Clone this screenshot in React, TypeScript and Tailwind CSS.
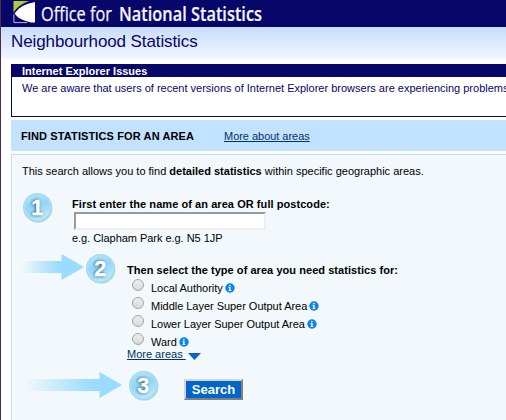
import React from "react";

function Logo() {
  return (
    <svg width="280" height="27" viewBox="0 0 280 27" className="block overflow-visible">
      <path d="M12.5 1H28Q17 5 12.5 12.5Z" fill="#b5c93c" />
      <path d="M12.9 14.5V22.6H26" fill="none" stroke="#c9cbe6" strokeWidth="0.9" />
      <path d="M34 2V22.5H30Q18 20 13.5 13.5Q19 4.5 34 2Z" fill="#fff" />
      <g fontFamily="'Open Sans', 'Noto Sans', sans-serif" fontSize="19.5" fill="#f4f4ff">
        <text x="40" y="20.5" stroke="#f4f4ff" strokeWidth="0.25" textLength="71" lengthAdjust="spacingAndGlyphs">Office for</text>
        <text x="118" y="20.5" fontWeight="600" stroke="#f4f4ff" strokeWidth="0.2" textLength="143" lengthAdjust="spacingAndGlyphs">National Statistics</text>
      </g>
    </svg>
  );
}

function Step({ n }: { n: number }) {
  return (
    <svg width="32" height="32" viewBox="0 0 32 32" className="block shrink-0">
      <defs>
        <linearGradient id={"ball" + n} x1="0" y1="0" x2="0.3" y2="1">
          <stop offset="0" stopColor="#b9e6fa" />
          <stop offset="0.5" stopColor="#94d5f6" />
          <stop offset="1" stopColor="#b4e9fd" />
        </linearGradient>
        <filter id={"soft" + n} x="-50%" y="-50%" width="200%" height="200%">
          <feGaussianBlur stdDeviation="1.5" />
        </filter>
      </defs>
      <circle cx="16.1" cy="16.5" r="14.3" fill="#b9dcc8" />
      <circle cx="15.5" cy="15.5" r="14.5" fill="#9bd8f4" />
      <circle cx="15.5" cy="15.5" r="13" fill={"url(#ball" + n + ")"} stroke="#b2e2f8" strokeWidth="1" />
      <g fontFamily="'Liberation Sans', Arial, sans-serif" fontWeight="700" fontSize="22.5" textAnchor="middle">
        <text x="14.5" y="23.3" fill="#3d6480" stroke="#3d6480" strokeWidth="1" filter={"url(#soft" + n + ")"} textLength="11.5" lengthAdjust="spacingAndGlyphs">{n}</text>
        <text x="15.2" y="22.8" fill="#fff" stroke="#fff" strokeWidth="0.3" textLength="12" lengthAdjust="spacingAndGlyphs">{n}</text>
      </g>
    </svg>
  );
}

function Arrow({ w, id }: { w: number; id: string }) {
  const head = w - 22.5;
  return (
    <svg width={w} height="28" className="block shrink-0">
      <defs>
        <linearGradient id={id}>
          <stop offset="0" stopColor="#f2f8fb" />
          <stop offset="0.9" stopColor="#99dcff" />
        </linearGradient>
      </defs>
      <rect x="0" y="8" width={head + 1} height="12" fill={`url(#${id})`} />
      <path d={`M${head} 1L${w} 14L${head} 27Z`} fill="#99dcff" />
    </svg>
  );
}

function Info() {
  return (
    <svg width="10" height="10" viewBox="0 0 10 10" className="ml-0.5 block">
      <circle cx="5" cy="5" r="4.7" fill="#0a84f5" />
      <path d="M4 2H5.6V3.3H4ZM3.5 4.1H5.6V7.2H6.4V8H3.5V7.2H4.2V4.9H3.5Z" fill="#fff" />
    </svg>
  );
}

const areas = ["Local Authority", "Middle Layer Super Output Area", "Lower Layer Super Output Area", "Ward"];

export default function App() {
  return (
    <div className="h-[420px] w-[506px] overflow-hidden border-l border-[#512b3f] bg-white font-['Liberation_Sans',Arial,sans-serif] text-[11px] leading-[14px] text-black">
      <header className="h-[27px] bg-[#070669]"><Logo /></header>
      <div className="h-8 bg-linear-to-b from-[#c9dcfb] to-[#f2f7ff] pt-[5px] pl-2.5 text-[17px] leading-5 tracking-[-0.1px] whitespace-nowrap text-[#070669]">
        Neighbourhood Statistics
      </div>
      <div className="pt-[5px] pl-2.5">
        <section className="h-[53px] w-[510px] border border-[#070669] bg-white whitespace-nowrap">
          <h2 className="h-3 bg-[#070669] pl-2.5 leading-[13px] font-bold text-white">Internet Explorer Issues</h2>
          <p className="pt-1 pl-2.5 text-[#070669]">We are aware that users of recent versions of Internet Explorer browsers are experiencing problems</p>
        </section>
        <div className="mt-[3px] flex h-[31px] items-center bg-[#c3e2ff] pl-2.5">
          <h1 className="w-[203px] pt-px font-bold tracking-[0.12px] whitespace-nowrap">FIND STATISTICS FOR AN AREA</h1>
          <a className="pt-px tracking-[-0.03px] text-[#003366] underline">More about areas</a>
        </div>
        <main className="mt-[3px] h-[270px] w-[510px] border border-[#c3e0f8] bg-[#f2f8fb] pt-[9px] pl-2.5">
          <p className="whitespace-nowrap">This search allows you to find <b>detailed statistics</b> within specific geographic areas.</p>
          <div className="mt-[14px] flex h-[60px] items-start">
            <Step n={1} />
            <div className="ml-[18px] pt-[5px]">
              <label className="block font-bold tracking-[0.06px] whitespace-nowrap">First enter the name of an area OR full postcode:</label>
              <input type="text" className="mt-px ml-0.5 block h-[18px] w-[192px] border-2 border-t-[#999] border-r-[#eee] border-b-[#eee] border-l-[#999] bg-white" />
              <p className="mt-px tracking-[-0.04px]">e.g. Clapham Park e.g. N5 1JP</p>
            </div>
          </div>
          <div className="flex h-[119px] items-start">
            <div className="pt-px"><Arrow w={62} id="arrowShort" /></div>
            <div className="ml-px pt-px"><Step n={2} /></div>
            <div className="ml-[10px] pt-[11px]">
              <p className="mb-px font-bold tracking-[0.05px] whitespace-nowrap">Then select the type of area you need statistics for:</p>
              {areas.map((area) => (
                <label key={area} className="flex h-[18px] items-start whitespace-nowrap">
                  <input type="radio" name="area" className="mt-px mr-[7px] ml-[5px] h-3 w-3 appearance-none rounded-full border border-[#a5a5a5] bg-linear-to-b from-[#eeeeee] to-[#d8d8d8]" />
                  <span className="pt-[3px] tracking-[-0.03px]">{area}</span>
                  <span className="pt-[5px]"><Info /></span>
                </label>
              ))}
              <a className="-mt-[3px] flex h-[14px] items-start text-[#003366]">
                <span className="w-[58px] underline whitespace-pre">More areas </span>
                <svg width="13" height="7" className="mt-1.5 ml-[3px] block"><path d="M0 0H13L6.5 7Z" fill="#0562ce" /></svg>
              </a>
            </div>
          </div>
          <div className="flex items-start pl-[3px]">
            <Arrow w={97} id="arrowLong" />
            <div className="ml-1.5 -mt-px"><Step n={3} /></div>
            <button className="mt-2 ml-6 h-[21px] w-[59px] border-2 border-t-[#d4d4d4] border-r-[#808080] border-b-[#808080] border-l-[#d4d4d4] bg-[#0066cc] text-[13px] leading-[16px] font-bold text-white">Search</button>
          </div>
        </main>
      </div>
    </div>
  );
}
